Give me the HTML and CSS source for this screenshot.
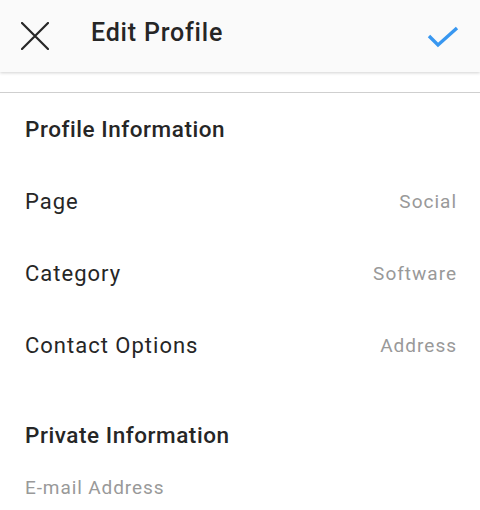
FILE: index.html
```html
<!DOCTYPE html>
<html>
<head>
<meta charset="utf-8">
<link rel="stylesheet" href="styles.css">
</head>
<body>
<header class="topbar">
  <svg class="icon-close" width="28" height="28" viewBox="0 0 28 28"><path d="M1 1 L27 27 M27 1 L1 27" stroke="#262626" stroke-width="2.2" stroke-linecap="round" fill="none"/></svg>
  <h1 class="title">Edit Profile</h1>
  <svg class="icon-check" width="34" height="24" viewBox="0 0 34 24"><path d="M3 11 L12 20 L31 3" stroke="#3897f0" stroke-width="3.4" fill="none"/></svg>
</header>
<div class="spacer"></div>
<main class="content">
  <div class="section-title">Profile Information</div>
  <div class="row"><span class="label">Page</span><span class="value">Social</span></div>
  <div class="row"><span class="label">Category</span><span class="value">Software</span></div>
  <div class="row"><span class="label">Contact Options</span><span class="value">Address</span></div>
  <div class="section-title private">Private Information</div>
  <div class="field">E-mail Address</div>
</main>
</body>
</html>
```
FILE: styles.css
```css
* { box-sizing: border-box; margin: 0; padding: 0; }
html, body { background: #fff; }
body {
  font-family: Roboto, "Noto Sans", sans-serif;
  color: #262626;
  width: 480px;
  height: 510px;
  overflow: hidden;
}
.topbar {
  height: 72px;
  background: #fafafa;
  display: flex;
  align-items: center;
  padding: 0 20px 0 21px;
  box-shadow: 0 1px 3px rgba(0,0,0,0.18);
  position: relative;
  z-index: 1;
}
.icon-close { flex: none; }
.title {
  font-size: 25px;
  font-weight: 500;
  margin-left: 42px;
  margin-top: -7px;
  flex: 1;
  letter-spacing: 0.8px;
}
.icon-check { flex: none; margin-top: 2px; }
.spacer {
  height: 21px;
  border-bottom: 1px solid #cfcfcf;
}
.content { padding: 0 24px 0 25px; }
.section-title {
  height: 72px;
  display: flex;
  align-items: center;
  font-size: 22.5px;
  font-weight: 500;
  letter-spacing: 0.55px;
}
.section-title.private {
  margin-top: 18px;
}
.row {
  height: 72px;
  display: flex;
  align-items: center;
  justify-content: space-between;
}
.label { font-size: 22px; letter-spacing: 1px; }
.value { font-size: 19px; color: #999; letter-spacing: 1px; margin-right: -1px; }
.field {
  font-size: 19px;
  color: #999;
  height: 36px;
  display: flex;
  align-items: center;
  margin-top: -2px;
  letter-spacing: 0.9px;
}
```
